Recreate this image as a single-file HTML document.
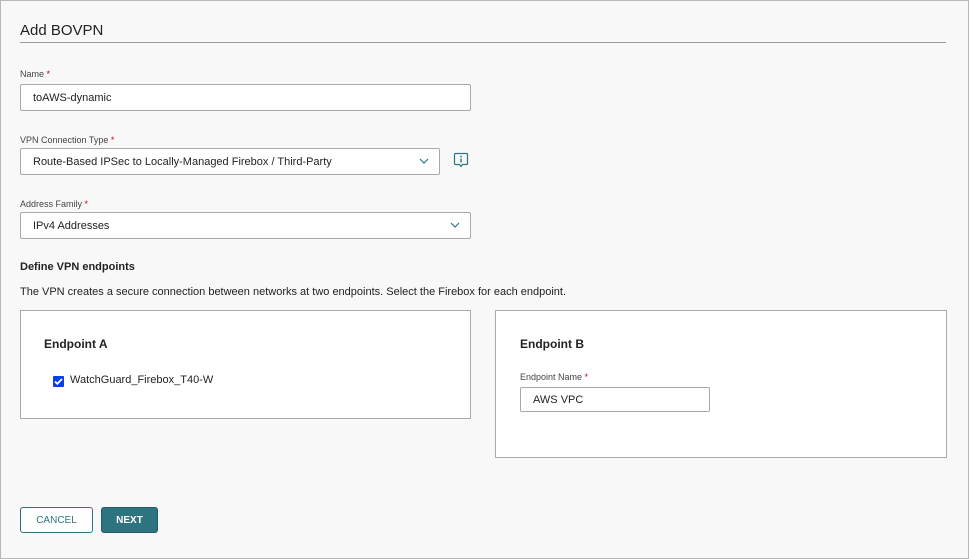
<!DOCTYPE html>
<html><head><style>
*{box-sizing:border-box;margin:0;padding:0}
body{width:969px;height:559px;background:#f7f8f7;font-family:"Liberation Sans",sans-serif;color:#222;position:relative;overflow:hidden}
.frame{position:absolute;left:0;top:0;width:969px;height:559px;border:1px solid #b8b8b8}
.a{position:absolute}
.lbl{font-size:9px;color:#444}
.lbl b{color:#d0021b;font-weight:normal}
.inp{background:#fff;border:1px solid #a9a9a9;border-radius:2px;font-size:11px;padding-left:12px;display:flex;align-items:center}
.chev{position:absolute;right:10px;top:8px}
.box{background:#fff;border:1px solid #a9a9a9}
</style></head><body>
<div class="frame"></div>
<div class="a" style="left:20px;top:22px;font-size:15px;color:#222">Add BOVPN</div>
<div class="a" style="left:20px;top:42px;width:926px;height:1px;background:#9a9a9a"></div>

<div class="a lbl" style="left:20px;top:69px">Name <b>*</b></div>
<div class="a inp" style="left:20px;top:84px;width:451px;height:27px">toAWS-dynamic</div>

<div class="a lbl" style="left:20px;top:135px">VPN Connection Type <b>*</b></div>
<div class="a inp" style="left:20px;top:148px;width:420px;height:27px">Route-Based IPSec to Locally-Managed Firebox / Third-Party
<svg class="chev" width="10" height="8" viewBox="0 0 10 8"><path d="M1 2l4 4 4-4" fill="none" stroke="#2e7480" stroke-width="1.2"/></svg></div>
<svg class="a" style="left:453px;top:152px" width="16" height="17" viewBox="0 0 16 17"><path d="M2.5 1.5h11a1 1 0 0 1 1 1v9a1 1 0 0 1-1 1h-4l-1.5 2-1.5-2h-4a1 1 0 0 1-1-1v-9a1 1 0 0 1 1-1z" fill="none" stroke="#2e7480" stroke-width="1.2"/><circle cx="8" cy="4.5" r=".9" fill="#2e7480"/><path d="M8 6.5v4" stroke="#2e7480" stroke-width="1.4"/></svg>

<div class="a lbl" style="left:20px;top:199px">Address Family <b>*</b></div>
<div class="a inp" style="left:20px;top:212px;width:451px;height:27px">IPv4 Addresses
<svg class="chev" width="10" height="8" viewBox="0 0 10 8"><path d="M1 2l4 4 4-4" fill="none" stroke="#2e7480" stroke-width="1.2"/></svg></div>

<div class="a" style="left:20px;top:261px;font-size:11px;font-weight:bold">Define VPN endpoints</div>
<div class="a" style="left:20px;top:286px;font-size:11px">The VPN creates a secure connection between networks at two endpoints. Select the Firebox for each endpoint.</div>

<div class="a box" style="left:20px;top:310px;width:451px;height:109px"></div>
<div class="a" style="left:44px;top:337px;font-size:12px;font-weight:bold">Endpoint A</div>
<div class="a" style="left:53px;top:376px;width:11px;height:11px;background:#0a3ee8;border-radius:1px"><svg width="11" height="11" viewBox="0 0 11 11" style="display:block"><path d="M2 5.5l2.3 2.3L9 3" fill="none" stroke="#fff" stroke-width="1.8"/></svg></div>
<div class="a" style="left:70px;top:374px;font-size:11px">WatchGuard_Firebox_T40-W</div>

<div class="a box" style="left:495px;top:310px;width:452px;height:148px"></div>
<div class="a" style="left:520px;top:337px;font-size:12px;font-weight:bold">Endpoint B</div>
<div class="a lbl" style="left:520px;top:372px">Endpoint Name <b>*</b></div>
<div class="a inp" style="left:520px;top:387px;width:190px;height:25px">AWS VPC</div>

<div class="a" style="left:20px;top:507px;width:73px;height:26px;border:1px solid #2e7480;border-radius:3px;background:#fff;color:#2e7480;font-size:10px;display:flex;align-items:center;justify-content:center">CANCEL</div>
<div class="a" style="left:101px;top:507px;width:57px;height:26px;background:#2e7480;border:1px solid #235c66;border-radius:3px;color:#fff;font-size:10px;font-weight:bold;display:flex;align-items:center;justify-content:center">NEXT</div>
</body></html>
